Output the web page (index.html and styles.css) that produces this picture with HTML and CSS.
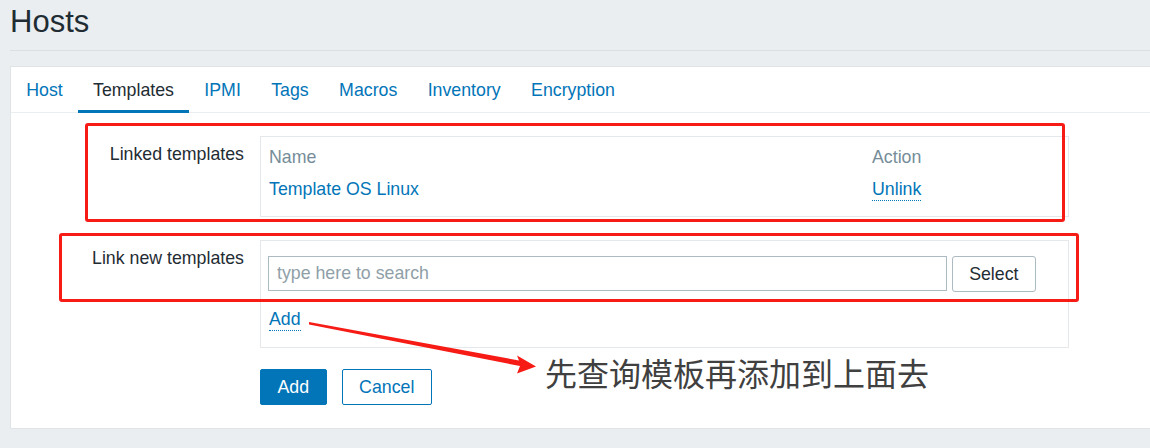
FILE: index.html
```html
<!DOCTYPE html>
<html lang="en">
<head>
    <meta charset="UTF-8">
    <title>Hosts</title>
    <link rel="stylesheet" href="styles.css">
</head>
<body>
    <div class="header">
        <h1>Hosts</h1>
    </div>

    <div class="panel">
        <ul class="tabs">
            <li><a href="#">Host</a></li>
            <li class="active"><a href="#">Templates</a></li>
            <li><a href="#">IPMI</a></li>
            <li><a href="#">Tags</a></li>
            <li><a href="#">Macros</a></li>
            <li><a href="#">Inventory</a></li>
            <li><a href="#">Encryption</a></li>
        </ul>

        <div class="form">
            <div class="form-row">
                <label>Linked templates</label>
                <div class="field-box linked">
                    <div class="th">Name</div>
                    <div class="th">Action</div>
                    <div class="td"><a href="#" class="link">Template OS Linux</a></div>
                    <div class="td"><a href="#" class="link dotted">Unlink</a></div>
                </div>
            </div>
            <div class="form-row">
                <label>Link new templates</label>
                <div class="field-box new">
                    <div class="search">
                        <input type="text" placeholder="type here to search">
                        <button class="btn-alt">Select</button>
                    </div>
                    <a href="#" class="link dotted">Add</a>
                </div>
            </div>
            <div class="form-row">
                <span></span>
                <div class="actions">
                    <button class="btn-main">Add</button>
                    <button class="btn-outline">Cancel</button>
                </div>
            </div>
        </div>
    </div>

    <!-- annotations drawn over the screenshot -->
    <div class="mark mark-linked"></div>
    <div class="mark mark-new"></div>
    <svg class="arrow" width="1150" height="448" viewBox="0 0 1150 448">
        <polygon fill="#f71b16" points="309,322 519,360.5 517,355.5 536,366.5 517,373.5 520,366 309,324.5"/>
    </svg>
    <div class="note">先查询模板再添加到上面去</div>
</body>
</html>
```

FILE: styles.css
```css
body {
    margin: 0;
    background-color: #ebeef0;
    font-family: "Liberation Sans", Arial, sans-serif;
    font-size: 17.75px;
    color: #1f2c33;
    height: 448px;
    overflow: hidden;
}
.header {
    margin: 0 0 15px 10px;
    padding: 4px 0 10px;
    border-bottom: 1px solid #dadfe3;
}
.header h1 {
    margin: 0;
    font-size: 31px;
    font-weight: normal;
    line-height: 36px;
}
.panel {
    margin-left: 10px;
    background-color: #fff;
    border: 1px solid #dfe4e7;
    border-right: none;
    height: 363px;
    box-sizing: border-box;
}
.tabs {
    display: flex;
    list-style: none;
    margin: 0;
    padding: 0;
    border-bottom: 1px solid #ebeef0;
}
.tabs li {
    margin-bottom: -1px;
    border-bottom: 3px solid transparent;
}
.tabs li a {
    display: block;
    padding: 13px 15.2px 9px;
    line-height: 21px;
    color: #0275b8;
    text-decoration: none;
}
.tabs li.active {
    border-bottom-color: #0275b8;
}
.tabs li.active a {
    color: #1f2c33;
}
.form {
    padding-top: 23px;
    display: flex;
    flex-direction: column;
    gap: 23px;
}
.form-row {
    display: grid;
    grid-template-columns: 233px 809px;
    column-gap: 16px;
}
.form-row label {
    text-align: right;
    padding-top: 8px;
    line-height: 21px;
}
.field-box {
    border: 1px solid #e4e8eb;
    box-sizing: border-box;
}
.linked {
    height: 81px;
    padding: 4px 8px 0;
    display: grid;
    grid-template-columns: 1fr 188px;
    grid-auto-rows: 32px;
}
.linked .th,
.linked .td {
    display: flex;
    align-items: center;
}
.linked .th {
    color: #768d99;
}
.link {
    color: #0275b8;
    text-decoration: none;
}
.link.dotted {
    display: inline-block;
    border-bottom: 1px dotted #0275b8;
    line-height: normal;
}
.linked .td .link.dotted {
    margin-top: 2px;
}
.new {
    padding: 15px 8px 16px 7px;
    height: 108px;
}
.search {
    display: flex;
    gap: 5px;
    margin-bottom: 17px;
    width: 768px;
}
.search input {
    flex: 1;
    height: 35px;
    box-sizing: border-box;
    border: 1px solid #acbac1;
    padding: 0 8px;
    font-family: inherit;
    font-size: 17.75px;
    color: #1f2c33;
}
.search input::placeholder {
    color: #909fa8;
}
.new > .link {
    margin-left: 1px;
}
button {
    font-family: inherit;
    font-size: 17.75px;
    height: 36px;
    padding: 0 16.5px;
    border-radius: 2px;
    cursor: pointer;
}
.btn-alt {
    background-color: #fff;
    border: 1px solid #acbac1;
    color: #1f2c33;
    border-radius: 3px;
}
.actions {
    display: flex;
    gap: 15px;
    margin-top: -2px;
}
.btn-main {
    background-color: #0275b8;
    border: 1px solid #0275b8;
    color: #fff;
}
.btn-outline {
    background-color: #fff;
    border: 1px solid #0275b8;
    color: #0275b8;
}
.mark {
    position: absolute;
    border: 3.5px solid #f71b16;
    border-radius: 3px;
    box-sizing: border-box;
}
.mark-linked {
    left: 85px;
    top: 123px;
    width: 980px;
    height: 99px;
}
.mark-new {
    left: 59px;
    top: 233px;
    width: 1020px;
    height: 69px;
}
.arrow {
    position: absolute;
    left: 0;
    top: 0;
}
.note {
    position: absolute;
    left: 545px;
    top: 352px;
    font-family: "Noto Sans CJK SC", sans-serif;
    font-size: 32px;
    line-height: 40px;
    color: #404040;
}
```
